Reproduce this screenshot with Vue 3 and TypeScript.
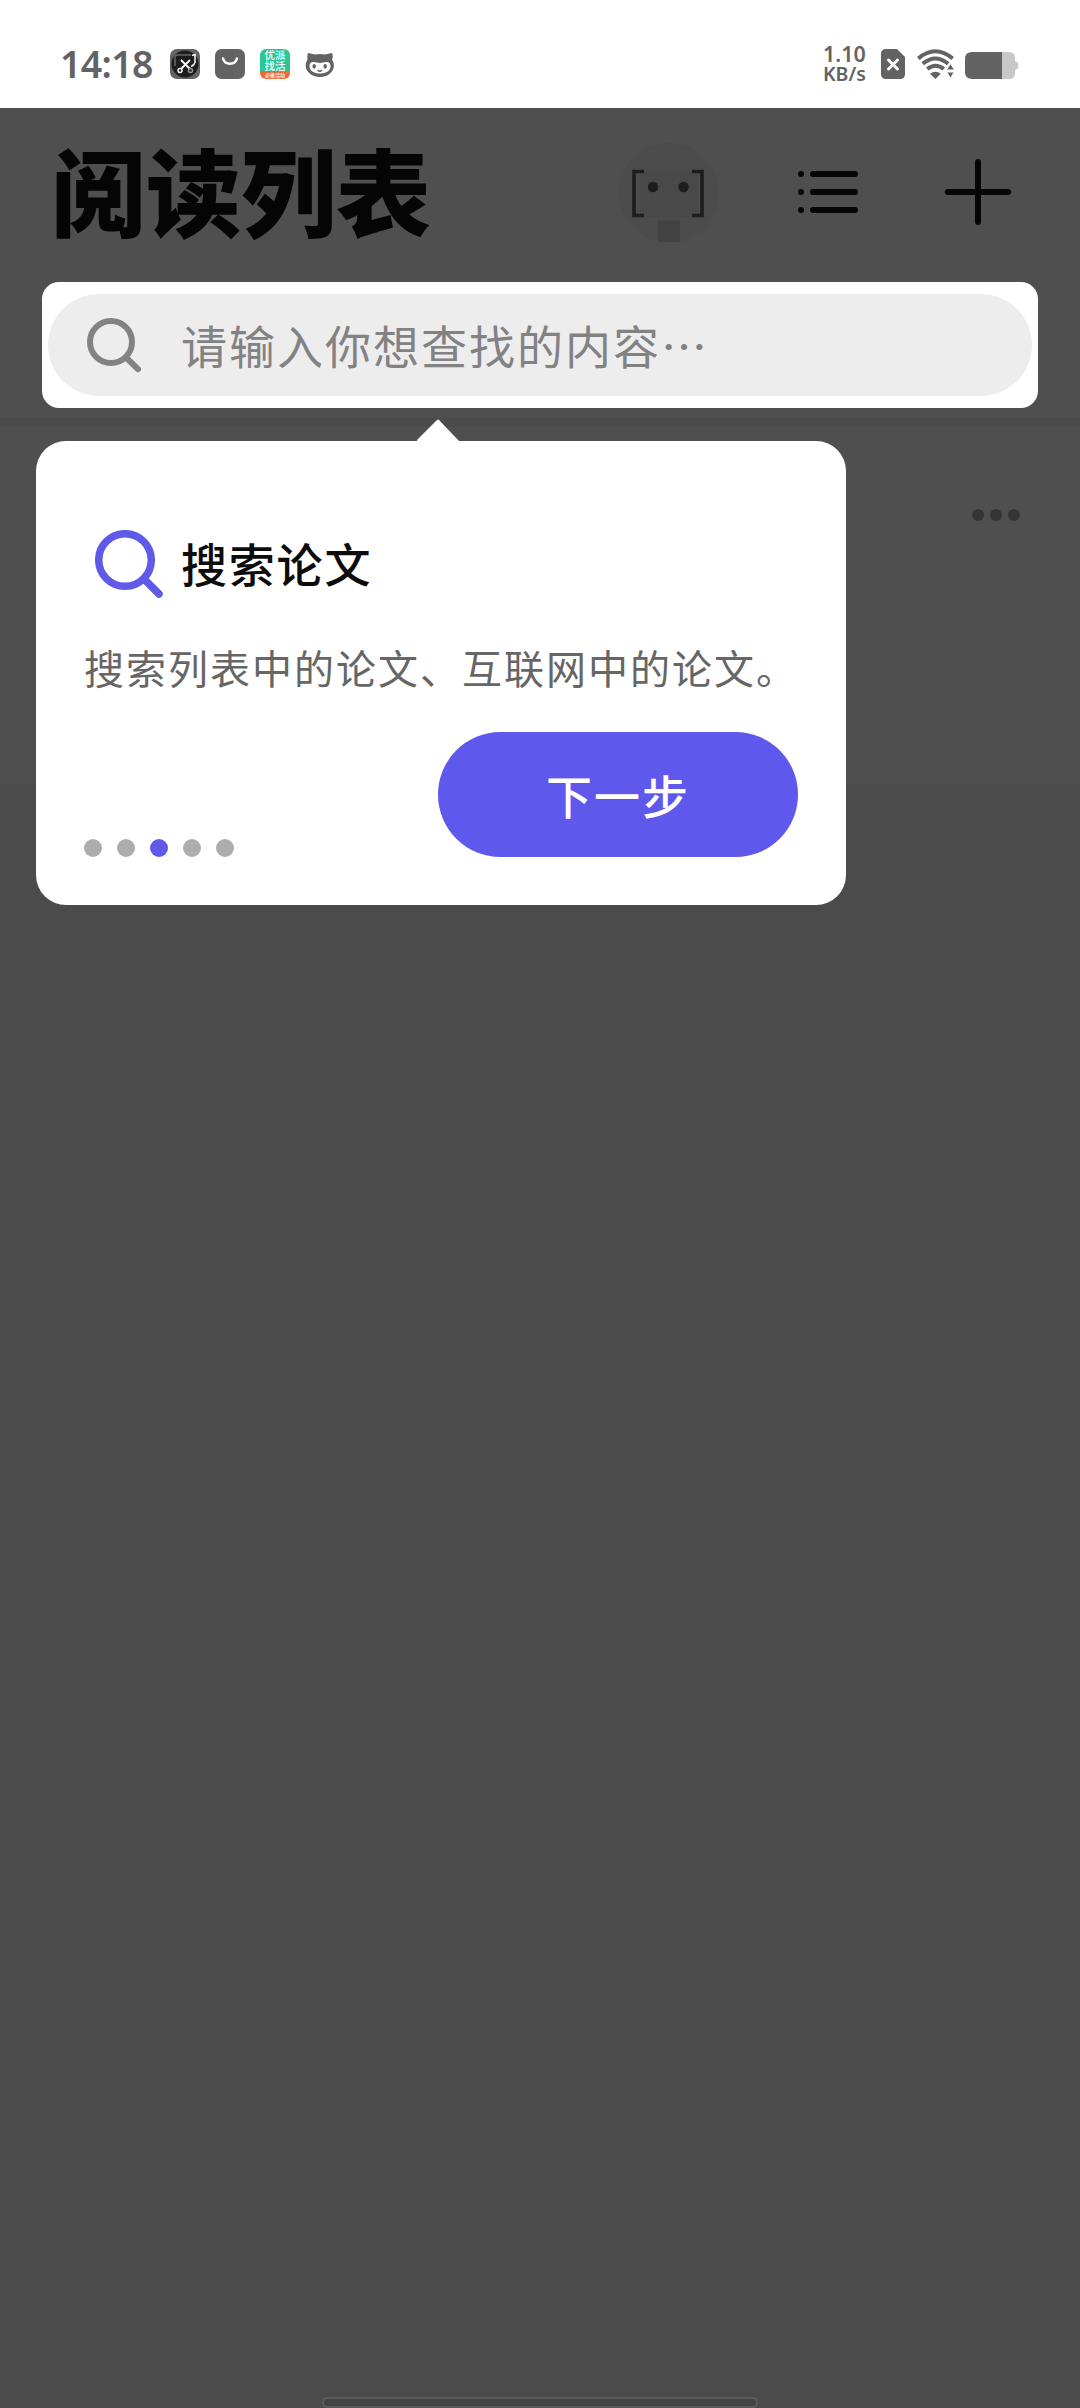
<script setup lang="ts">
const steps: number[] = [0, 1, 2, 3, 4]
const currentStep = 2
</script>

<template>
  <div class="screen">
    <header class="status">
      <span class="clock">14:18</span>
      <svg class="app-icon" viewBox="0 0 30 30">
        <rect width="30" height="30" rx="7" fill="#636363" />
        <circle cx="15" cy="15" r="13.5" fill="#1d1d1d" />
        <path d="M5 17V8q0-2 2-2h14" fill="none" stroke="#666" stroke-width="1.6" />
        <path d="M22 6.5l3-1v8q-1 3-4 4" fill="none" stroke="#fff" stroke-width="1.5" />
        <path d="M11 11l9 9M20 11l-9 9" stroke="#fff" stroke-width="1.8" />
        <circle cx="10" cy="21.5" r="2" fill="none" stroke="#fff" stroke-width="1.4" />
        <circle cx="20.5" cy="21.5" r="2" fill="none" stroke="#999" stroke-width="1.4" />
      </svg>
      <svg class="app-icon" viewBox="0 0 30 30">
        <rect width="30" height="30" rx="6.5" fill="#636363" />
        <path d="M8 9.5c2 7 12 7 14 0" fill="none" stroke="#fff" stroke-width="2.6" stroke-linecap="round" />
      </svg>
      <div class="promo">
        <span>优派</span>
        <span>找活</span>
        <em>必备活动</em>
      </div>
      <svg class="app-icon" viewBox="0 0 30 30">
        <path d="M3 4l7 1.5q5-1 10 0L27 4q1.500 4 0 6.500 3 5 1.500 9C26 26 20 28 15 28S4 26 1 19.500Q0 14 2.500 10.500 1.800 7 3 4z" fill="#636363" />
        <path d="M4.500 17q0-4 4-4c2.500 0 4.500 1 6.500 1s4-1 6.500-1q4 0 4 4c0 5.500-5 7.500-10.500 7.500S4.500 22.500 4.500 17z" fill="#fff" />
        <ellipse cx="9.200" cy="17.300" rx="1.700" ry="2.400" fill="#636363" />
        <ellipse cx="20.200" cy="17.300" rx="1.700" ry="2.400" fill="#636363" />
        <path d="M12.500 21.200q2.300 2 4.500 0" fill="none" stroke="#636363" stroke-width="1.500" />
      </svg>
      <div class="speed"><span>1.10</span><span>KB/s</span></div>
      <svg class="sim" viewBox="0 0 24 30">
        <path d="M5 0h11l8 8v17q0 5-5 5H5q-5 0-5-5V5q0-5 5-5z" fill="#636363" />
        <path d="M7.500 11l9 9M16.500 11l-9 9" stroke="#fff" stroke-width="3" stroke-linecap="round" />
      </svg>
      <svg class="wifi" viewBox="0 0 38 30">
        <g fill="none" stroke="#636363" stroke-width="4">
          <path d="M1.200 9.500q17-14.500 34.500 0" />
          <path d="M5.700 14.700q12.700-10.500 25.500 0" />
          <path d="M10.300 20q8.200-6.500 16.500 0" />
        </g>
        <path d="M13 24.800q5.500-4 10.800 0L18.400 30z" fill="#636363" />
        <path d="M33.500 14.500l4.200 6.500h-8.400z" fill="#636363" stroke="#fff" stroke-width="1" />
        <path d="M33.500 29.500l3.700-6.500h-7.400z" fill="#636363" stroke="#fff" stroke-width="1" />
      </svg>
      <svg class="battery" viewBox="0 0 54 27">
        <path d="M36 0h8q6 0 6 6v3l2 1q1.500 1 1.500 3.500T52 17l-2 1v3q0 6-6 6h-8z" fill="#c8c8c8" />
        <path d="M7 0h30v27H7q-7 0-7-7V7q0-7 7-7z" fill="#636363" />
      </svg>
    </header>

    <main class="page">
      <div class="titlebar">
        <h1>阅读列表</h1>
        <svg class="robot" viewBox="0 0 102 102">
          <circle cx="51" cy="51" r="50" fill="#4c4c4c" />
          <rect x="22" y="30" width="58" height="45" fill="#494949" />
          <rect x="40" y="78" width="22" height="22" fill="#434343" />
          <path d="M26 29.500H16V73.500H26M74 29.500H84V73.500H74" fill="none" stroke="#1d1d1d" stroke-width="3.600" />
          <circle cx="35" cy="45" r="5.200" fill="#1d1d1d" />
          <circle cx="65.500" cy="45" r="5.200" fill="#1d1d1d" />
        </svg>
        <svg class="list" viewBox="0 0 60 42">
          <g stroke="#050505" stroke-width="6" stroke-linecap="round">
            <path d="M3 3h.01M15 3h42M3 21h.01M15 21h42M3 39h.01M15 39h42" />
          </g>
        </svg>
        <svg class="plus" viewBox="0 0 66 66">
          <path d="M33 3v60M3 33h60" stroke="#050505" stroke-width="6" stroke-linecap="round" />
        </svg>
      </div>

      <div class="spotlight">
        <div class="search">
          <svg viewBox="0 0 56 56">
            <circle cx="24" cy="24" r="21" />
            <path d="M39.500 40l11.500 11.200" />
          </svg>
          <span>请输入你想查找的内容⋯</span>
        </div>
      </div>

      <section class="card">
        <div class="more"><b></b><b></b><b></b></div>
        <aside class="guide">
          <svg class="arrow" viewBox="0 0 42 23"><path d="M0 23v-2L20 1q1-1 2 0L42 22v1z" fill="#fff" /></svg>
          <div class="guide-title">
            <svg viewBox="0 0 70 70">
              <circle cx="30" cy="30" r="26.300" />
              <path d="M50 50l14 14" />
            </svg>
            <h2>搜索论文</h2>
          </div>
          <p>搜索列表中的论文、互联网中的论文。</p>
          <div class="guide-foot">
            <div class="dots">
              <b v-for="s in steps" :key="s" :class="{ on: s === currentStep }"></b>
            </div>
            <button>下一步</button>
          </div>
        </aside>
      </section>
      <div class="home"></div>
    </main>
  </div>
</template>

<style>
body { margin: 0; }
</style>

<style scoped>
* { box-sizing: border-box; }
.screen { width: 1080px; height: 2408px; display: flex; flex-direction: column; overflow: hidden; background: #4b4b4b; font-family: "Noto Sans CJK SC", sans-serif; }
svg { display: block; flex: none; }
.status { height: 108px; flex: none; background: #fff; color: #636363; display: flex; align-items: center; padding: 20px 62px 0 60px; font-family: "Noto Sans", sans-serif; }
.clock { width: 110px; font-size: 37.500px; font-weight: 600; line-height: 40px; letter-spacing: -0.700px; }
.app-icon { width: 30px; height: 30px; margin-right: 15px; }
.promo { width: 30px; height: 30px; margin-right: 15px; border-radius: 6px; background: linear-gradient(#2bc59a 0 73%, #ee6a35 73%); color: #fff; display: flex; flex-direction: column; align-items: center; font-family: "Noto Sans CJK SC", sans-serif; font-size: 10.500px; line-height: 11px; font-weight: 500; flex: none; }
.promo em { font-size: 5px; line-height: 7px; font-style: normal; }
.speed { margin-left: auto; width: 58px; display: flex; flex-direction: column; font-size: 21.500px; line-height: 20px; font-weight: 600; flex: none; }
.speed span:last-child { font-size: 19.500px; }
.sim { width: 24px; height: 30px; margin-right: 12px; }
.wifi { width: 38px; height: 30px; margin-right: 10px; }
.battery { width: 54px; height: 27px; margin-right: -1px; margin-top: 2px; }
.page { flex: 1; display: flex; flex-direction: column; align-items: center; }
.titlebar { width: 100%; height: 174px; flex: none; background: #4f4f4f; display: flex; align-items: center; padding: 0 69px 6px 51px; }
h1 { margin: -6px auto 0 0; font-size: 95px; line-height: 100px; font-weight: 900; color: #050505; }
.robot { width: 102px; height: 102px; margin: 2px 78px 0 0; }
.list { width: 60px; height: 42px; margin-right: 87px; }
.plus { width: 66px; height: 66px; }
.spotlight { width: 100%; height: 135px; flex: none; background: #4f4f4f; padding: 0 42px 9px; }
.search { height: 126px; border-radius: 17px; background: #fff; position: relative; z-index: 0; display: flex; align-items: center; padding-left: 44px; color: #828282; }
.search::before { content: ""; position: absolute; z-index: -1; inset: 12px 6px; border-radius: 51px; background: #ededed; }
.search svg { width: 56px; height: 56px; margin: 1px 38px 0 1px; fill: none; stroke: #828282; stroke-width: 6; stroke-linecap: round; }
.search span { font-size: 46px; letter-spacing: 2px; line-height: 60px; margin-top: -3px; }
.card { width: 100%; height: 357px; flex: none; margin-top: 10px; background: #4f4f4f; position: relative; display: flex; justify-content: flex-end; padding: 82px 60px 0 0; }
.more { display: flex; gap: 6px; height: 12px; }
.more b { width: 12px; height: 12px; border-radius: 50%; background: #343434; }
.guide { position: absolute; left: 36px; top: 14px; width: 810px; height: 464px; border-radius: 30px; background: #fff; padding: 84px 48px 48px; display: flex; flex-direction: column; }
.arrow { position: absolute; left: 381px; top: -22px; width: 42px; height: 23px; }
.guide-title { display: flex; align-items: center; height: 78px; padding-left: 7px; }
.guide-title svg { width: 70px; height: 70px; margin: 1px -4px 0 4px; fill: none; stroke: #6059e9; stroke-width: 7.500; stroke-linecap: round; }
h2 { margin: -4px 0 0 20px; font-size: 46px; letter-spacing: 1.800px; line-height: 60px; font-weight: 500; color: #0c0c0c; }
p { margin: 34px 0 0; font-size: 40px; letter-spacing: 2px; line-height: 60px; color: #666; white-space: nowrap; }
.guide-foot { margin-top: auto; display: flex; align-items: flex-end; justify-content: space-between; }
.dots { display: flex; gap: 15px; }
.dots b { width: 18px; height: 18px; border-radius: 50%; background: #adadad; }
.dots b.on { background: #6059e9; }
button { width: 360px; height: 125px; border: 0; border-radius: 63px; background: #5f58ec; color: #fff; font: 500 46px/60px "Noto Sans CJK SC", sans-serif; letter-spacing: 2px; padding: 0 0 2px; }
.home { width: 436px; height: 11px; margin-top: auto; margin-bottom: 0; border: 2px solid #5a5a5a; border-radius: 6px; background: #434343; }
</style>
